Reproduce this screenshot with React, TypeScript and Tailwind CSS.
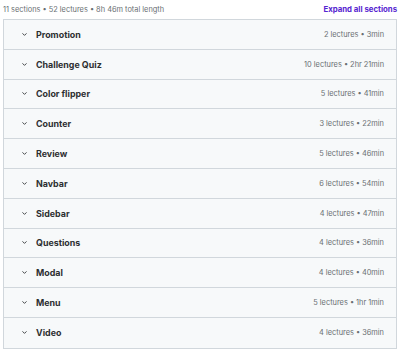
const sections = [
  ["Promotion", "2 lectures • 3min"],
  ["Challenge Quiz", "10 lectures • 2hr 21min"],
  ["Color flipper", "5 lectures • 41min"],
  ["Counter", "3 lectures • 22min"],
  ["Review", "5 lectures • 46min"],
  ["Navbar", "6 lectures • 54min"],
  ["Sidebar", "4 lectures • 47min"],
  ["Questions", "4 lectures • 36min"],
  ["Modal", "4 lectures • 40min"],
  ["Menu", "5 lectures • 1hr 1min"],
  ["Video", "4 lectures • 36min"],
];

function Chevron() {
  return (
    <svg width="7" height="7" viewBox="0 0 24 24" fill="none" stroke="#2d2f31" strokeWidth="3" strokeLinecap="round" strokeLinejoin="round">
      <path d="M6 9l6 6 6-6" />
    </svg>
  );
}

export default function App() {
  return (
    <div className="h-[350px] w-[400px] bg-white px-[3px] pt-[1px] font-['Inter','Liberation_Sans',sans-serif] text-[#2d2f31]">
      <div className="flex h-[18px] items-center justify-between">
        <span className="text-[7.4px] text-[#6a6f73]">11 sections • 52 lectures • 8h 46m total length</span>
        <span className="text-[7.8px] font-bold text-[#5624d0]">Expand all sections</span>
      </div>
      <div className="border border-[#d1d7dc]">
        {sections.map(([title, meta], i) => (
          <div
            key={title}
            className={`flex h-[29.8px] items-center justify-between bg-[#f7f9fa] pl-[16.5px] pr-[12px] ${
              i < sections.length - 1 ? "border-b border-[#d1d7dc]" : ""
            }`}
          >
            <div className="flex items-center gap-[8.5px]">
              <Chevron />
              <span className="text-[8.9px] font-bold">{title}</span>
            </div>
            <span className="text-[7.4px] text-[#6a6f73]">{meta}</span>
          </div>
        ))}
      </div>
    </div>
  );
}
